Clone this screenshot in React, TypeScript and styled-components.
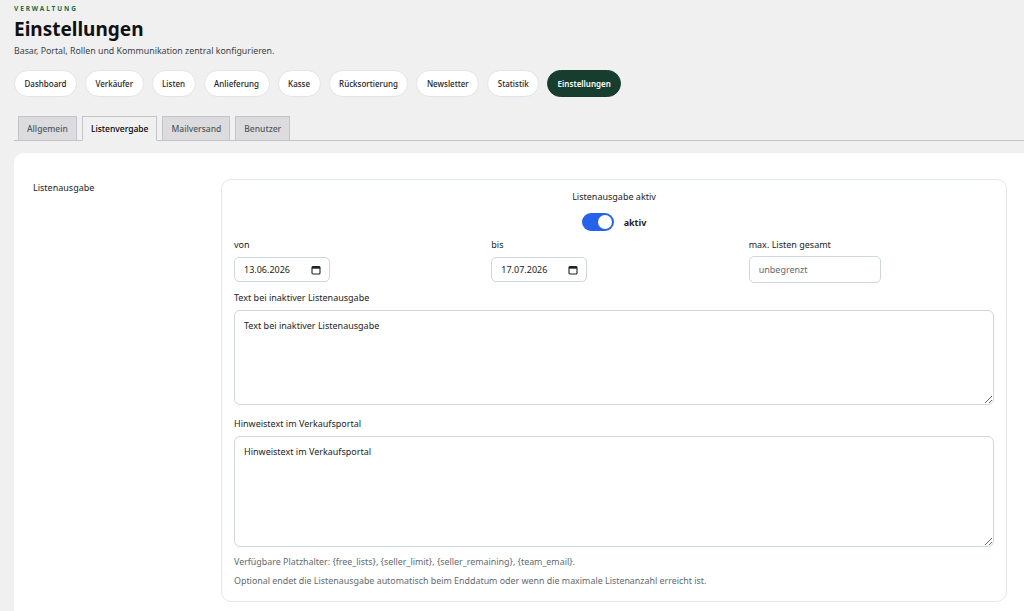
import { useState } from 'react';
import styled, { createGlobalStyle } from 'styled-components';

const GlobalStyle = createGlobalStyle`
    html, body {
        margin: 0;
        padding: 0;
        background: #f0f0f0;
        overflow: hidden;
    }
    body {
        font-family: "Noto Sans", "Open Sans", sans-serif;
        color: #1d2327;
        font-size: 9px;
    }
`;

const Page = styled.div`
    height: 100vh;
    box-sizing: border-box;
    padding: 5px 0 0 14px;
    display: flex;
    flex-direction: column;
    overflow: hidden;
`;

const Eyebrow = styled.div`
    font-size: 6.5px;
    font-weight: 700;
    letter-spacing: 1.9px;
    color: #1f6b4a;
    text-transform: uppercase;
    line-height: 8px;
`;

const Title = styled.h1`
    margin: 3px 0 0;
    font-size: 19px;
    font-weight: 700;
    line-height: 26px;
    color: #111;
`;

const Subtitle = styled.p`
    margin: 3px 0 0;
    font-size: 8.8px;
    color: #3c434a;
    line-height: 12px;
`;

const Nav = styled.nav`
    display: flex;
    gap: 8px;
    margin-top: 13px;
`;

const Pill = styled.button<{ $active?: boolean }>`
    height: 27px;
    padding: 0 9.5px;
    border-radius: 14px;
    border: 1px solid ${p => (p.$active ? '#173d2e' : '#e2e4e7')};
    background: ${p => (p.$active ? '#173d2e' : '#fff')};
    color: ${p => (p.$active ? '#fff' : '#1d2327')};
    font-family: inherit;
    font-size: 8px;
    font-weight: ${p => (p.$active ? 600 : 500)};
    cursor: pointer;
`;

const Tabs = styled.div`
    display: flex;
    gap: 5px;
    margin-top: 19px;
    padding-left: 4px;
    border-bottom: 1px solid #c3c4c7;
`;

const Tab = styled.div<{ $active?: boolean }>`
    height: 23px;
    padding: 0 8px;
    display: flex;
    align-items: center;
    margin-bottom: -1px;
    border: 1px solid #c3c4c7;
    border-bottom-color: ${p => (p.$active ? '#f0f0f0' : '#c3c4c7')};
    background: ${p => (p.$active ? '#f0f0f0' : '#dcdcde')};
    color: ${p => (p.$active ? '#000' : '#50575e')};
    font-size: 8.5px;
    font-weight: 500;
`;

const Card = styled.section`
    flex: 1;
    margin-top: 12px;
    margin-right: -20px;
    background: #fff;
    border-radius: 10px;
    padding: 26px 37px 20px 19px;
    display: grid;
    grid-template-columns: 188px 1fr;
    align-items: start;
`;

const RowLabel = styled.div`
    font-size: 9px;
    color: #1d2327;
    padding-top: 2px;
`;

const Panel = styled.div`
    border: 1px solid #e4e7ec;
    border-radius: 10px;
    padding: 10px 12px 14px 12px;
`;

const ToggleBlock = styled.div`
    display: flex;
    flex-direction: column;
    align-items: center;
`;

const ToggleTitle = styled.div`
    font-size: 9px;
    color: #1d2327;
`;

const ToggleRow = styled.label`
    display: flex;
    align-items: center;
    gap: 10px;
    margin-top: 10px;
    font-size: 9px;
    font-weight: 700;
    color: #1d2327;
`;

const Switch = styled.span<{ $on: boolean }>`
    width: 32px;
    height: 18px;
    border-radius: 9px;
    background: ${p => (p.$on ? '#2563eb' : '#c3c4c7')};
    position: relative;
    display: inline-block;
    cursor: pointer;

    &::after {
        content: '';
        position: absolute;
        top: 2px;
        left: ${p => (p.$on ? '16px' : '2px')};
        width: 14px;
        height: 14px;
        border-radius: 50%;
        background: #fff;
    }
`;

const Grid3 = styled.div`
    display: grid;
    grid-template-columns: repeat(3, 1fr);
    gap: 12px;
    margin-top: 8px;
`;

const Field = styled.div<{ $gap?: number }>`
    display: flex;
    flex-direction: column;
    margin-top: ${p => p.$gap ?? 0}px;
`;

const FieldLabel = styled.label`
    font-size: 9px;
    color: #1d2327;
    line-height: 12px;
    margin-bottom: 6px;
`;

const DateBox = styled.div`
    width: 96px;
    height: 25px;
    box-sizing: border-box;
    border: 1px solid #cfd6e0;
    border-radius: 5px;
    display: flex;
    align-items: center;
    justify-content: space-between;
    padding: 0 8px 0 9px;
    font-size: 9px;
    color: #1d2327;
    background: #fff;
`;

const TextInput = styled.input`
    width: 132px;
    height: 27px;
    box-sizing: border-box;
    border: 1px solid #cfd6e0;
    border-radius: 5px;
    padding: 0 9px;
    font-family: inherit;
    font-size: 9px;
    margin-top: -1px;

    &::placeholder {
        color: #646970;
    }
`;

const Area = styled.textarea<{ $h: number }>`
    width: 100%;
    height: ${p => p.$h}px;
    box-sizing: border-box;
    border: 1px solid #cfd6e0;
    border-radius: 6px;
    padding: 8px 9px;
    font-family: inherit;
    font-size: 9px;
    color: #1d2327;
    resize: vertical;
`;

const Hint = styled.p`
    margin: 9px 0 0;
    font-size: 8.9px;
    line-height: 12px;
    color: #646970;

    & + & {
        margin-top: 7px;
    }
`;

const CalendarIcon = () => (
    <svg width="10" height="10" viewBox="0 0 10 10" fill="none">
        <rect x="1" y="1.5" width="8" height="7.5" rx="1" stroke="#1d2327" strokeWidth="1.1" />
        <rect x="1" y="1.5" width="8" height="2.2" fill="#1d2327" />
    </svg>
);

const pages = [
    'Dashboard',
    'Verkäufer',
    'Listen',
    'Anlieferung',
    'Kasse',
    'Rücksortierung',
    'Newsletter',
    'Statistik',
    'Einstellungen'
];

const tabs = ['Allgemein', 'Listenvergabe', 'Mailversand', 'Benutzer'];

export default function App() {
    const [active, setActive] = useState(true);

    return (
        <Page>
            <GlobalStyle />
            <Eyebrow>Verwaltung</Eyebrow>
            <Title>Einstellungen</Title>
            <Subtitle>Basar, Portal, Rollen und Kommunikation zentral konfigurieren.</Subtitle>

            <Nav>
                {pages.map(page => (
                    <Pill key={page} $active={page === 'Einstellungen'}>
                        {page}
                    </Pill>
                ))}
            </Nav>

            <Tabs>
                {tabs.map(tab => (
                    <Tab key={tab} $active={tab === 'Listenvergabe'}>
                        {tab}
                    </Tab>
                ))}
            </Tabs>

            <Card>
                <RowLabel>Listenausgabe</RowLabel>
                <Panel>
                    <ToggleBlock>
                        <ToggleTitle>Listenausgabe aktiv</ToggleTitle>
                        <ToggleRow>
                            <Switch $on={active} onClick={() => setActive(!active)} />
                            aktiv
                        </ToggleRow>
                    </ToggleBlock>

                    <Grid3>
                        <Field>
                            <FieldLabel>von</FieldLabel>
                            <DateBox>
                                13.06.2026
                                <CalendarIcon />
                            </DateBox>
                        </Field>
                        <Field>
                            <FieldLabel>bis</FieldLabel>
                            <DateBox>
                                17.07.2026
                                <CalendarIcon />
                            </DateBox>
                        </Field>
                        <Field>
                            <FieldLabel>max. Listen gesamt</FieldLabel>
                            <TextInput placeholder="unbegrenzt" />
                        </Field>
                    </Grid3>

                    <Field $gap={9}>
                        <FieldLabel>Text bei inaktiver Listenausgabe</FieldLabel>
                        <Area $h={95} defaultValue="Text bei inaktiver Listenausgabe" />
                    </Field>

                    <Field $gap={13}>
                        <FieldLabel>Hinweistext im Verkaufsportal</FieldLabel>
                        <Area $h={111} defaultValue="Hinweistext im Verkaufsportal" />
                    </Field>

                    <Hint>
                        Verfügbare Platzhalter: {'{free_lists}'}, {'{seller_limit}'},{' '}
                        {'{seller_remaining}'}, {'{team_email}'}.
                    </Hint>
                    <Hint>
                        Optional endet die Listenausgabe automatisch beim Enddatum oder wenn die
                        maximale Listenanzahl erreicht ist.
                    </Hint>
                </Panel>
            </Card>
        </Page>
    );
}
